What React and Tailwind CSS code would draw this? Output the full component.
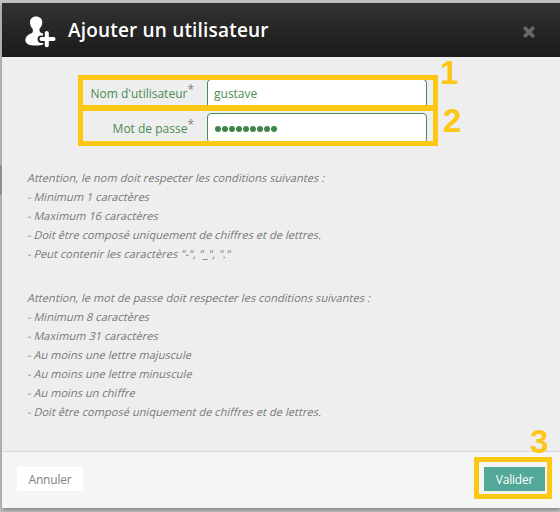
const nameRules = [
  "Attention, le nom doit respecter les conditions suivantes :",
  "- Minimum 1 caractères",
  "- Maximum 16 caractères",
  "- Doit être composé uniquement de chiffres et de lettres.",
  '- Peut contenir les caractères "-", "_", "."',
];

const passwordRules = [
  "Attention, le mot de passe doit respecter les conditions suivantes :",
  "- Minimum 8 caractères",
  "- Maximum 31 caractères",
  "- Au moins une lettre majuscule",
  "- Au moins une lettre minuscule",
  "- Au moins un chiffre",
  "- Doit être composé uniquement de chiffres et de lettres.",
];

function UserPlusIcon() {
  return (
    <svg className="ml-[22px] mt-[3px] h-8 w-8 shrink-0" viewBox="0 0 32 32" fill="#fff">
      <path d="M12 0.500C8.500 0.500 6 2.800 6 6.200C6 9 7 11 8.600 12.800C9.300 15.500 8.800 17 7 17.500C3 19 1 21.500 1.500 25.500C3 28.500 6 29.500 11 29.500C15 29.500 18 29 20 28V27H17C13 27 13 20 17 20H19V17.500C16.500 17 15 15.500 15.400 12.800C17 11 18.300 9 18.300 6.200C18.300 2.800 15.700 0.500 12 0.500Z" />
      <path d="M22.800 17V29.500M17 23H29" fill="none" stroke="#262626" strokeWidth="7" strokeLinecap="round" />
      <path d="M22.800 17V29.300M17.500 23H29.500" fill="none" stroke="#fff" strokeWidth="4" strokeLinecap="round" />
    </svg>
  );
}

function CloseIcon() {
  return (
    <svg className="mr-[25px] h-3 w-3" viewBox="0 0 12 12">
      <path d="M2.300 2.300L9.700 9.700M9.700 2.300L2.300 9.700" stroke="#686868" strokeWidth="3.700" strokeLinecap="round" />
    </svg>
  );
}

function Label({ children }) {
  return (
    <label className="flex w-[111px] justify-end whitespace-nowrap text-[12px] leading-[18px] text-[#4a8b54]">
      {children}
      <span className="relative -top-[4px] text-[12px] text-[#808080]">*</span>
    </label>
  );
}

function Rules({ lines }) {
  return (
    <ul className="text-[11px] leading-[19px] tracking-[0.06px] text-[#777]">
      {lines.map((text) => (
        <li key={text} className="w-fit origin-center -skew-x-[14deg] whitespace-nowrap">{text}</li>
      ))}
    </ul>
  );
}

export default function App() {
  return (
    <div className="relative h-[512px] w-[560px] overflow-hidden bg-[#c5c3c5] pl-[2px] pt-[3px] font-['Open_Sans','Noto_Sans',sans-serif]">
      <div className="flex h-[505px] w-[558px] flex-col bg-[#eee] shadow-[0_2px_4px_rgba(0,0,0,0.35)]">
        <header className="flex h-[54px] shrink-0 items-center bg-linear-to-b from-[#333] to-[#1a1a1a]">
          <UserPlusIcon />
          <h1 className="ml-[12px] text-[19px] font-semibold leading-6 tracking-[0.18px] text-white">Ajouter un utilisateur</h1>
          <span className="ml-auto pt-1"><CloseIcon /></span>
        </header>

        <main className="h-[394px] shrink-0 pl-[26px] pt-[18px]">
          <div className="ml-[50px] flex h-[93px] items-start">
            <div className="w-[360px] shrink-0 border-[5px] border-[#fdc716]">
              <div className="flex h-[25px] overflow-hidden">
                <div className="pt-[5px]"><Label>Nom d'utilisateur</Label></div>
                <div className="-mt-px ml-[13px] h-[30px] w-[220px] shrink-0 rounded-[4px] border border-[#4a8b54] bg-white pl-[6px] pt-[5px] text-[12px] leading-[18px] text-[#4a8b54]">gustave</div>
              </div>
              <div className="h-[6px] bg-[#fdc716]" />
              <div className="flex h-[30px] overflow-hidden">
                <div className="pt-[9px]"><Label>Mot de passe</Label></div>
                <div className="ml-[13px] mt-[2px] flex h-[30px] w-[220px] shrink-0 gap-[1px] rounded-[4px] border border-[#4a8b54] bg-white pl-[7px] pt-[12px]">
                  {Array.from({ length: 9 }, (_, i) => (
                    <span key={i} className="h-[6px] w-[6px] rounded-full bg-[#3f8549]" />
                  ))}
                </div>
              </div>
            </div>
            <div className="-mt-[26px] ml-[5px] flex flex-col font-['Liberation_Sans',sans-serif] text-[33px] font-bold leading-[48px] text-[#fdc716]">
              <span className="-ml-[3px]">1</span>
              <span>2</span>
            </div>
          </div>
          <div className="flex flex-col gap-[25px]">
            <Rules lines={nameRules} />
            <Rules lines={passwordRules} />
          </div>
        </main>

        <footer className="flex flex-1 items-start justify-between border-t border-[#d8d8d8] bg-[#f5f5f5] pl-[15px] pr-[8px]">
          <button className="mt-[15px] h-6 w-[66px] bg-white pt-[2px] text-[12px] leading-[22px] tracking-[-0.2px] text-[#808285]">Annuler</button>
          <div className="relative mt-[5px] h-[42px] w-[78px] border-[5px] border-[#fdc716] p-[5px]">
            <button className="block h-6 w-[61px] bg-[#52a899] pt-[2px] text-[12px] leading-[22px] tracking-[-0.2px] text-white">Valider</button>
            <span className="absolute -top-[38px] left-[51px] font-['Liberation_Sans',sans-serif] text-[33px] font-bold leading-[36px] text-[#fdc716]">3</span>
          </div>
        </footer>
      </div>
      <div className="absolute left-0 top-[165px] h-[30px] w-[2px] bg-[#8f8f8f]" />
    </div>
  );
}
